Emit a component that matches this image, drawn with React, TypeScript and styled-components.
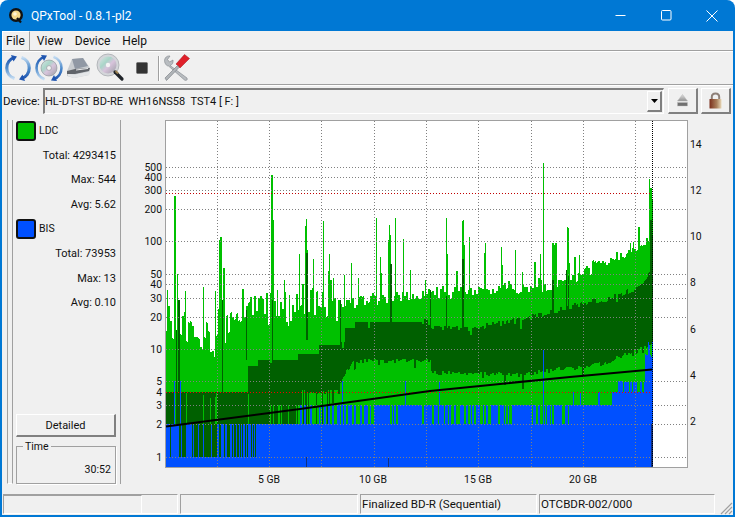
import React from "react";
import styled, { createGlobalStyle } from "styled-components";

const FONT = `Roboto, "Open Sans", "Liberation Sans", sans-serif`;

const Global = createGlobalStyle`
  html, body { margin: 0; padding: 0; background: #fff; }
  body { font-family: ${FONT}; font-size: 12px; color: #111; }
`;

const Window = styled.div`
  width: 735px; height: 517px; box-sizing: border-box; overflow: hidden;
  display: flex; flex-direction: column;
  background: #0078d4; border-radius: 8px 8px 0 0; padding: 0 2px 2px 2px;
`;
const TitleBar = styled.div`
  height: 31px; flex: none; display: flex; align-items: center; color: #fff;
  padding-left: 8px; margin: 0 -2px;
`;
const TitleText = styled.span`
  margin-left: 7px; font-size: 12px; flex: 1;
`;
const WinButton = styled.div`
  width: 46px; height: 31px; display: flex; align-items: center; justify-content: center;
`;
const Client = styled.div`
  flex: 1; min-height: 0; background: #f0f0f0; display: flex; flex-direction: column;
`;
const MenuBar = styled.div`
  height: 19px; flex: none; display: flex; align-items: stretch;
  border-bottom: 1px solid #a0a0a0; line-height: 14px;
`;
const MenuItem = styled.div<{ $active?: boolean }>`
  padding: 3px 6px 0;
  ${p => p.$active && "border-left: 1px solid #fff; border-right: 1px solid #a0a0a0; border-top: 1px solid #fff; padding: 2px 4px 0 3px; margin-right: 1px;"}
`;
const Toolbar = styled.div`
  height: 32px; flex: none; border-top: 1px solid #fff; border-bottom: 1px solid #a0a0a0;
  display: flex; align-items: center;
`;
const ToolSep = styled.div`
  width: 1px; height: 25px; background: #a0a0a0; border-right: 1px solid #fff;
`;
const ToolIcon = styled.div<{ $w: number }>`
  width: ${p => p.$w}px; height: 31px; display: flex; align-items: center; justify-content: center; flex: none;
`;
const DeviceRow = styled.div`
  height: 32px; flex: none; box-sizing: border-box; padding: 2px 0 3px 1px; border-top: 1px solid #fff;
  display: flex; align-items: stretch; gap: 3px;
`;
const DeviceLabel = styled.label`
  width: 37px; display: flex; align-items: center; font-size: 11.5px;
`;
const Combo = styled.div`
  width: 621px; box-sizing: border-box; display: flex; align-items: center; justify-content: space-between;
  border-top: 2px solid #808080; border-left: 2px solid #808080; border-bottom: 1px solid #fff; border-right: 1px solid #fff;
  padding: 0 1px 0 0; font-size: 11px; white-space: pre; background: #f0f0f0;
`;
const ComboArrow = styled.div`
  width: 15px; height: 21px; box-sizing: border-box; display: flex; align-items: center; justify-content: center;
  border-top: 1px solid #fff; border-left: 1px solid #fff; border-right: 2px solid #808080; border-bottom: 2px solid #808080;
`;
const DevButton = styled.div<{ $first?: boolean }>`
  width: 30px; box-sizing: border-box; display: flex; align-items: center; justify-content: center;
  margin-left: ${p => (p.$first ? 1 : 0)}px;
  border-top: 1px solid #fff; border-left: 1px solid #fff; border-right: 2px solid #808080; border-bottom: 2px solid #808080;
`;
const Body = styled.div`
  flex: 1; min-height: 0; display: flex; align-items: stretch;
`;
const Strip = styled.div`
  width: 6px; box-sizing: border-box; margin: 3px 0 5px 5px; border-left: 1px solid #a0a0a0; border-right: 1px solid #a0a0a0;
  border-bottom: 1px solid #fff; flex: none;
`;
const SidePanel = styled.div`
  width: 108px; flex: none; box-sizing: border-box; margin: 3px 0 5px; padding: 0 4px 0 3px; display: flex; flex-direction: column;
  border-right: 1px solid #a0a0a0;
`;
const LegendRow = styled.div`
  height: 24.6px; flex: none; display: flex; align-items: center; gap: 3px; font-size: 10.5px;
  &:first-child { margin-top: -1.75px; }
`;
const Swatch = styled.div<{ $c: string }>`
  width: 20px; height: 20px; box-sizing: border-box; border-radius: 3px; border: 2px solid #111; background: ${p => p.$c};
`;
const StatRow = styled.div`
  height: 24.6px; flex: none; display: flex; align-items: center; justify-content: flex-end; font-size: 11px;
`;
const Spacer = styled.div` flex: 1; `;
const DetailButton = styled.div`
  height: 23px; width: 100px; flex: none; box-sizing: border-box; display: flex; align-items: center; justify-content: center; font-size: 11px;
  border-top: 1px solid #fff; border-left: 1px solid #fff; border-right: 2px solid #808080; border-bottom: 2px solid #808080;
  margin-bottom: 4.5px;
`;
const TimeGroup = styled.fieldset`
  margin: 0; padding: 0 4px 0 0; height: 42.5px; width: 100px; box-sizing: border-box; flex: none;
  border: 1px solid #a0a0a0; box-shadow: 1px 1px 0 #fff; font-size: 10.6px; min-width: 0;
  legend { margin-left: 6px; padding: 0 2px; line-height: 10px; font-size: 10.5px; }
`;
const TimeValue = styled.div`
  margin-top: 10.5px; line-height: 16px; text-align: right;
`;
const ChartWrap = styled.div`
  flex: 1; min-width: 0;
`;
const ChartSvg = styled.svg`
  display: block;
  text { font-family: ${FONT}; font-size: 10.4px; fill: #111; }
`;
const StatusBar = styled.div`
  height: 25px; flex: none; display: flex; gap: 2px; padding: 4px 0 1px 1px; box-sizing: border-box; margin-top: 1px; position: relative;
`;
const StatusCell = styled.div<{ $w: number }>`
  width: ${p => p.$w}px; box-sizing: border-box; display: flex; align-items: center; padding-left: 1px; font-size: 11.6px; white-space: pre;
  border-top: 1px solid #a0a0a0; border-left: 1px solid #a0a0a0; border-right: 1px solid #fff; border-bottom: 1px solid #fff;
`;
const ProgressPart = styled.div`
  width: 137px; align-self: stretch; margin-left: -1px; border-top: 1px solid #a0a0a0; border-right: 1px solid #fff;
`;
const Grip = styled.svg`
  position: absolute; right: 0; bottom: 0;
`;

/* ---------- chart data ---------- */
function rng(seed: number) {
  let s = seed;
  return () => { s = (s * 1664525 + 1013904223) >>> 0; return ((s >>> 8) & 0xffff) / 65536; };
}
function interp(pts: number[][], x: number) {
  for (let i = 1; i < pts.length; i++) {
    if (x <= pts[i][0]) {
      const [a, b] = pts[i - 1], [c, d] = pts[i];
      return b + ((d - b) * (x - a)) / (c - a);
    }
  }
  return pts[pts.length - 1][1];
}
const lightEnv = [[166, 322], [185, 332], [215, 345], [228, 325], [250, 312], [300, 310], [340, 306], [370, 300], [430, 294], [480, 292], [540, 287], [575, 277], [600, 264], [625, 254], [648, 240], [653, 200]];
const darkTop = [[166, 392], [247, 392], [248, 366], [257, 366], [258, 360], [297, 360], [298, 354], [318, 354], [319, 345], [339, 345], [340, 342], [344, 342], [345, 328], [354, 328], [355, 322], [430, 322], [431, 328], [470, 328], [510, 322], [560, 310], [590, 302], [620, 296], [640, 285], [650, 270], [653, 220]];
const darkBot = [[166, 424], [295, 424], [296, 405], [301, 405], [302, 392], [339, 392], [340, 381], [345, 372], [355, 361], [430, 361], [431, 372], [520, 375], [600, 364], [645, 348], [653, 340]];
const spikes: number[][] = [[167, 290], [174, 196], [175, 196], [177, 274], [185, 291], [203, 287], [215, 291], [219, 240], [220, 237], [221, 237], [223, 268], [224, 268], [271, 175], [272, 175], [273, 220], [277, 290], [284, 280], [289, 295], [299, 254], [305, 226], [306, 219], [307, 250], [312, 288], [313, 259], [323, 221], [328, 271], [329, 254], [333, 278], [344, 275], [351, 263], [358, 278], [376, 218], [380, 257], [381, 273], [388, 240], [389, 225], [390, 235], [395, 218], [403, 239], [410, 270], [425, 280], [446, 218], [447, 254], [462, 221], [463, 220], [464, 245], [469, 237], [485, 243], [484, 253], [501, 247], [502, 265], [515, 250], [522, 272], [540, 254], [543, 163], [552, 243], [553, 243], [554, 245], [555, 243], [556, 243], [567, 227], [568, 228], [579, 255], [630, 243], [633, 242], [649, 179], [650, 188], [651, 188], [652, 200]];
const darkSpikes: number[][] = [[176, 330, 392], [178, 300, 392], [179, 300, 392], [222, 300, 392], [306, 253, 340], [307, 253, 340], [390, 264, 330], [391, 264, 330], [462, 259, 330], [463, 259, 330], [552, 280, 330], [553, 280, 330], [566, 270, 330], [568, 276, 330], [650, 220, 340], [651, 220, 340], [652, 240, 340], [272, 300, 360], [340, 300, 345], [246, 310, 360], [430, 290, 330], [446, 296, 330]];

function buildChart() {
  const r = rng(7291);
  let light = "", dark = "", blue = "", stripes = "", navy = "";
  const seg = (x: number, a: number, b: number) => (b > a ? `M${x + 0.5} ${Math.round(a)}V${Math.round(b)}` : "");
  const spikeMap = new Map<number, number>();
  spikes.forEach(([x, y]) => spikeMap.set(x, y));
  let heldL = 0, heldDt = 0, heldDb = 0, heldB = 424;
  for (let x = 166; x <= 652; x++) {
    const amp = x < 340 ? 36 : x < 600 ? 13 : 8;
    if (x % 2 === 0) {
      heldL = (r() - 0.55) * amp;
      if (r() < (x < 340 ? 0.16 : 0.08)) heldL -= r() * 20;
    }
    let L = interp(lightEnv, x) + heldL;
    const sp = spikeMap.get(x);
    if (sp !== undefined) L = sp;
    if (x % 2 === 0) {
      heldDt = x > 420 ? (r() - 0.5) * 6 : 0;
      if (r() < 0.04 && x > 248) heldDt = r() * 12;
      heldDb = x > 300 ? (r() - 0.5) * 5 : 0;
      if (r() < 0.05 && x > 300) heldDb = r() * 14;
    }
    const Dt = interp(darkTop, x) + heldDt;
    let Db = interp(darkBot, x) + heldDb;
    if (x < 250 && r() < 0.1) Db = 392 + r() * 10;
    if (x >= 270 && x < 296 && r() < 0.22) Db = 405;
    if (x >= 296 && x < 340 && r() < 0.3) Db = 424;
    // blue level
    if (x % 2 === 0 || r() < 0.4) {
      const q = r();
      if (x < 300) heldB = 424;
      else if (x < 370) heldB = q < 0.3 ? 405 : 424;
      else if (x < 430) heldB = q < 0.88 ? 405 : 424;
      else if (x < 570) heldB = q < 0.72 ? 405 : 424;
      else if (x < 615) heldB = q < 0.2 ? 392 : q < 0.97 ? 405 : 424;
      else if (x < 645) heldB = q < 0.6 ? 392 : 382;
      else heldB = 340 + r() * 20;
    }
    let Bt = heldB;
    if (x >= 618 && x <= 622) Bt = 381;
    if (x === 439 || x === 405 || x === 342) Bt = 381;
    if (x === 543) Bt = 350;
    if (x === 174 || x === 180) Bt = 381;
    light += seg(x, L, 424);
    blue += seg(x, Bt, 467);
    dark += seg(x, Dt, Db);
    if (x < 256) {
      const w = r();
      const stripe = (x >= 212 && x <= 216) || (x >= 204 && x <= 208) || (x > 190 && x < 230 && w < 0.55) || (x >= 230 && w < 0.4) || (x <= 190 && w < 0.3);
      if (stripe) stripes += seg(x, 424, 457);
    }
  }
  darkSpikes.forEach(([x, a, b]) => (dark += seg(x, a, b)));
  [306, 388].forEach(x => (navy += seg(x, 457, 467)));
  navy += "M651.5 424V467M652.5 424V467";
  return { light, dark, blue, stripes, navy };
}
const chart = buildChart();

const leftTicks: [string, number][] = [["500", 167], ["400", 177.5], ["300", 190.5], ["200", 209.5], ["100", 241.5], ["50", 274.5], ["40", 284.5], ["30", 298.5], ["20", 317.5], ["10", 349.5], ["5", 381.5], ["4", 392.5], ["3", 405.5], ["2", 424.5], ["1", 457.5]];
const rightTicks: [string, number][] = [["14", 144], ["12", 190], ["10", 236], ["8", 282], ["6", 329], ["4", 375], ["2", 421]];
const bottomTicks: [string, number][] = [["5 GB", 269], ["10 GB", 373], ["15 GB", 478], ["20 GB", 583]];
const vGrid = [217, 269, 321, 374, 426, 478, 531, 583, 635];
const hGrid = [167, 177, 209, 241, 274, 284, 298, 317, 349, 381, 405, 424, 457];

/* Chart svg origin = page (121,117) */
function Chart() {
  return (
    <ChartSvg width={612} height={371} viewBox="121 117 612 371">
      <rect x={165.5} y={120.5} width={522} height={347} fill="#fff" stroke="#a0a0a0" />
      <g shapeRendering="crispEdges" strokeWidth={1} fill="none">
        <path d={chart.light} stroke="#00c000" />
        <path d={chart.dark} stroke="#006000" />
        <path d={chart.blue} stroke="#0050ff" />
        <path d={chart.stripes} stroke="#006000" />
        <path d={chart.navy} stroke="#103080" />
      </g>
      <g shapeRendering="crispEdges" stroke="#808080" strokeDasharray="1 2" strokeWidth={1} fill="none">
        {hGrid.map(y => <line key={y} x1={166} x2={687} y1={y + 0.5} y2={y + 0.5} />)}
        <line x1={166} x2={430} y1={190.5} y2={190.5} />
        {vGrid.map(x => <line key={x} x1={x + 0.5} x2={x + 0.5} y1={121} y2={467} />)}
      </g>
      <g shapeRendering="crispEdges" strokeDasharray="1 2" strokeWidth={1} fill="none">
        <line x1={166} x2={651} y1={193.5} y2={193.5} stroke="#c00000" />
        <line x1={166} x2={651} y1={392.5} y2={392.5} stroke="#f00000" />
      </g>
      <polyline points="166,426.5 300,409 430,391 570,377 652,369.5" fill="none" stroke="#000" strokeWidth={2.2} strokeLinejoin="round" />
      <line x1={652.5} x2={652.5} y1={121} y2={467} stroke="#000" strokeDasharray="1 1" shapeRendering="crispEdges" />
      {leftTicks.map(([t, y]) => <text key={t} x={162} y={y + 3.7} textAnchor="end">{t}</text>)}
      {rightTicks.map(([t, y]) => <text key={t} x={690} y={y + 3.7}>{t}</text>)}
      {bottomTicks.map(([t, x]) => <text key={t} x={x} y={482.7} textAnchor="middle">{t}</text>)}
    </ChartSvg>
  );
}

/* ---------- icons ---------- */
const Logo = () => (
  <svg width="16" height="18" viewBox="0 0 16 18">
    <circle cx="8" cy="8" r="7" fill="#111" />
    <circle cx="8" cy="8" r="4.6" fill="#f4d98a" />
    <circle cx="7" cy="7" r="1.8" fill="#fff6d8" />
    <path d="M9 11 L13 15.5" stroke="#111" strokeWidth="2.2" />
  </svg>
);

const Defs = () => (
  <defs>
    <linearGradient id="arcA" x1="0" y1="0" x2="0" y2="1">
      <stop offset="0" stopColor="#1f55b0" /><stop offset=".5" stopColor="#4f8ccc" /><stop offset="1" stopColor="#c4dcf2" />
    </linearGradient>
    <linearGradient id="arcB" x1="0" y1="0" x2="0" y2="1">
      <stop offset="0" stopColor="#c4dcf2" /><stop offset=".5" stopColor="#4f8ccc" /><stop offset="1" stopColor="#1f55b0" />
    </linearGradient>
    <linearGradient id="disc" x1="0" y1="0" x2="1" y2="1">
      <stop offset="0" stopColor="#dfe3e6" /><stop offset=".35" stopColor="#a9d6c8" /><stop offset=".55" stopColor="#d8c4dc" /><stop offset="1" stopColor="#9a9ea4" />
    </linearGradient>
    <linearGradient id="lockBody" x1="0" y1="0" x2="1" y2="0">
      <stop offset="0" stopColor="#7a2f1c" /><stop offset=".6" stopColor="#a9805c" /><stop offset="1" stopColor="#e8d8b8" />
    </linearGradient>
    <linearGradient id="ejectTri" x1="0" y1="0" x2="0" y2="1">
      <stop offset="0" stopColor="#e0e0e0" /><stop offset="1" stopColor="#909090" />
    </linearGradient>
  </defs>
);

const IconRefresh = () => (
  <svg width="28" height="28" viewBox="0 0 28 28">
    <path d="M10.5 3.5 A 11 11 0 0 0 10.5 24.5" fill="none" stroke="url(#arcA)" strokeWidth="3.2" />
    <path d="M7 1 L13 2.5 L9.5 7.5 Z" fill="#1f55b0" />
    <path d="M17.5 3.5 A 11 11 0 0 1 17.5 24.5" fill="none" stroke="url(#arcB)" strokeWidth="3.2" />
    <path d="M21 27 L15 25.5 L18.5 20.5 Z" fill="#1f55b0" />
  </svg>
);
const IconDiscRefresh = () => (
  <svg width="28" height="28" viewBox="0 0 28 28">
    <circle cx="14" cy="14" r="8" fill="url(#disc)" stroke="#8a8e94" strokeWidth=".6" />
    <circle cx="14" cy="14" r="2.4" fill="#f4f4f4" stroke="#8a8e94" strokeWidth=".6" />
    <path d="M9.5 2.7 A 12 12 0 0 0 9.5 25.3" fill="none" stroke="url(#arcA)" strokeWidth="2.6" />
    <path d="M6 1 L12 1.5 L9 7 Z" fill="#1f55b0" />
    <path d="M18.5 2.7 A 12 12 0 0 1 18.5 25.3" fill="none" stroke="url(#arcB)" strokeWidth="2.6" />
    <path d="M22 27 L16 26.5 L19 21 Z" fill="#1f55b0" />
  </svg>
);
const IconDrive = () => (
  <svg width="26" height="24" viewBox="0 0 26 24">
    <path d="M1 15 L6 3 L17 2 L24 12 L23 19 L8 22 L1 20 Z" fill="#c8ccd0" />
    <path d="M6 3 L17 2 L22 10 L9 13 Z" fill="#9098a4" />
    <path d="M1 15 L9 13 L24 12 L23 15 L9 18 L1 18 Z" fill="#60646a" />
    <path d="M2 18 L9 18.5 L24 15.5 L23 19 L8 22 L2 20 Z" fill="#e4e6e8" />
    <path d="M10 14 L22 12.5" stroke="#e8eaec" strokeWidth="1" />
  </svg>
);
const IconScan = () => (
  <svg width="30" height="30" viewBox="0 0 30 30">
    <circle cx="13" cy="12" r="11" fill="#d4d6da" stroke="#a8acb0" strokeWidth=".8" />
    <circle cx="13" cy="12" r="8.5" fill="url(#disc)" />
    <circle cx="13" cy="12" r="2.2" fill="#f4f4f4" />
    <path d="M20 19 L27 26" stroke="#20242a" strokeWidth="3.2" strokeLinecap="round" />
    <path d="M20.5 18 L23 20.5" stroke="#9a8050" strokeWidth="2" />
  </svg>
);
const IconStop = () => (
  <svg width="12" height="12" viewBox="0 0 12 12"><rect x="0.5" y="0.5" width="11" height="11" rx="1" fill="#333" stroke="#666" strokeWidth=".6" /></svg>
);
const IconTools = () => (
  <svg width="28" height="28" viewBox="0 0 28 28">
    <path d="M3 9 C1.5 5 4 1.5 8 2 L5.5 5.5 L7.5 8 L11 6 C11.5 9 10 11 8 11.5 L25 24 C26 26 24 27 22.5 26 L6.5 12 C5 12 4 11 3 9 Z" fill="#b8bcc0" stroke="#80848a" strokeWidth=".6" />
    <path d="M27.5 4.5 L22.5 .5 L14 10 L18 14 Z" fill="#e0202a" stroke="#a01018" strokeWidth=".5" />
    <path d="M15.5 11.5 L3 24 L4.5 26.5 L17 13.5 Z" fill="#b0b4b8" stroke="#74787e" strokeWidth=".6" />
  </svg>
);
const IconEject = () => (
  <svg width="11" height="13" viewBox="0 0 11 13">
    <path d="M5.5 .5 L10.5 7 L.5 7 Z" fill="url(#ejectTri)" stroke="#b4b4b4" strokeWidth=".5" />
    <rect x=".5" y="8.5" width="10" height="3.5" fill="#707070" stroke="#bcbcbc" strokeWidth=".4" />
  </svg>
);
const IconLock = () => (
  <svg width="13" height="17" viewBox="0 0 13 17">
    <path d="M2.8 8 V5 C2.8 .3 10.2 .3 10.2 5 V8" fill="none" stroke="#8e8078" strokeWidth="2" />
    <rect x=".5" y="7" width="12" height="9.5" fill="url(#lockBody)" rx=".6" />
  </svg>
);

export default function App() {
  return (
    <>
      <Global />
      <Window>
        <svg width="0" height="0" style={{ position: "absolute" }}><Defs /></svg>
        <TitleBar>
          <Logo />
          <TitleText>QPxTool - 0.8.1-pl2</TitleText>
          <WinButton><svg width="11" height="11"><path d="M0.5 5.5H10.5" stroke="#fff" /></svg></WinButton>
          <WinButton><svg width="11" height="11"><rect x=".5" y=".5" width="9.5" height="9.5" rx="1" fill="none" stroke="#fff" /></svg></WinButton>
          <WinButton><svg width="12" height="12"><path d="M.5 .5L11.5 11.5M11.5 .5L.5 11.5" stroke="#fff" /></svg></WinButton>
        </TitleBar>
        <Client>
          <MenuBar>
            <MenuItem $active>File</MenuItem>
            <MenuItem>View</MenuItem>
            <MenuItem>Device</MenuItem>
            <MenuItem>Help</MenuItem>
          </MenuBar>
          <Toolbar>
            <ToolIcon $w={31}><IconRefresh /></ToolIcon>
            <ToolIcon $w={31}><IconDiscRefresh /></ToolIcon>
            <ToolIcon $w={30}><IconDrive /></ToolIcon>
            <ToolIcon $w={31}><IconScan /></ToolIcon>
            <ToolIcon $w={33}><IconStop /></ToolIcon>
            <ToolSep />
            <ToolIcon $w={32}><IconTools /></ToolIcon>
          </Toolbar>
          <DeviceRow>
            <DeviceLabel>Device:</DeviceLabel>
            <Combo>
              {"HL-DT-ST BD-RE  WH16NS58  TST4 [ F: ]"}
              <ComboArrow><svg width="9" height="6"><path d="M1 1H8L4.5 5Z" fill="#000" /></svg></ComboArrow>
            </Combo>
            <DevButton $first><IconEject /></DevButton>
            <DevButton><IconLock /></DevButton>
          </DeviceRow>
          <Body>
            <Strip />
            <SidePanel>
              <LegendRow><Swatch $c="#00c000" />LDC</LegendRow>
              <StatRow>Total: 4293415</StatRow>
              <StatRow>Max: 544</StatRow>
              <StatRow>Avg: 5.62</StatRow>
              <LegendRow><Swatch $c="#0050ff" />BIS</LegendRow>
              <StatRow>Total: 73953</StatRow>
              <StatRow>Max: 13</StatRow>
              <StatRow>Avg: 0.10</StatRow>
              <Spacer />
              <DetailButton>Detailed</DetailButton>
              <TimeGroup><legend>Time</legend><TimeValue>30:52</TimeValue></TimeGroup>
            </SidePanel>
            <ChartWrap><Chart /></ChartWrap>
          </Body>
          <StatusBar>
            <StatusCell $w={175}><ProgressPart /></StatusCell>
            <StatusCell $w={178} />
            <StatusCell $w={177}>Finalized BD-R (Sequential)</StatusCell>
            <StatusCell $w={176}>OTCBDR-002/000</StatusCell>
            <Grip width="16" height="16" viewBox="0 0 16 16">
              <path d="M15 4L4 15M15 8L8 15M15 12L12 15" stroke="#a0a0a0" strokeWidth="1.2" />
            </Grip>
          </StatusBar>
        </Client>
      </Window>
    </>
  );
}
